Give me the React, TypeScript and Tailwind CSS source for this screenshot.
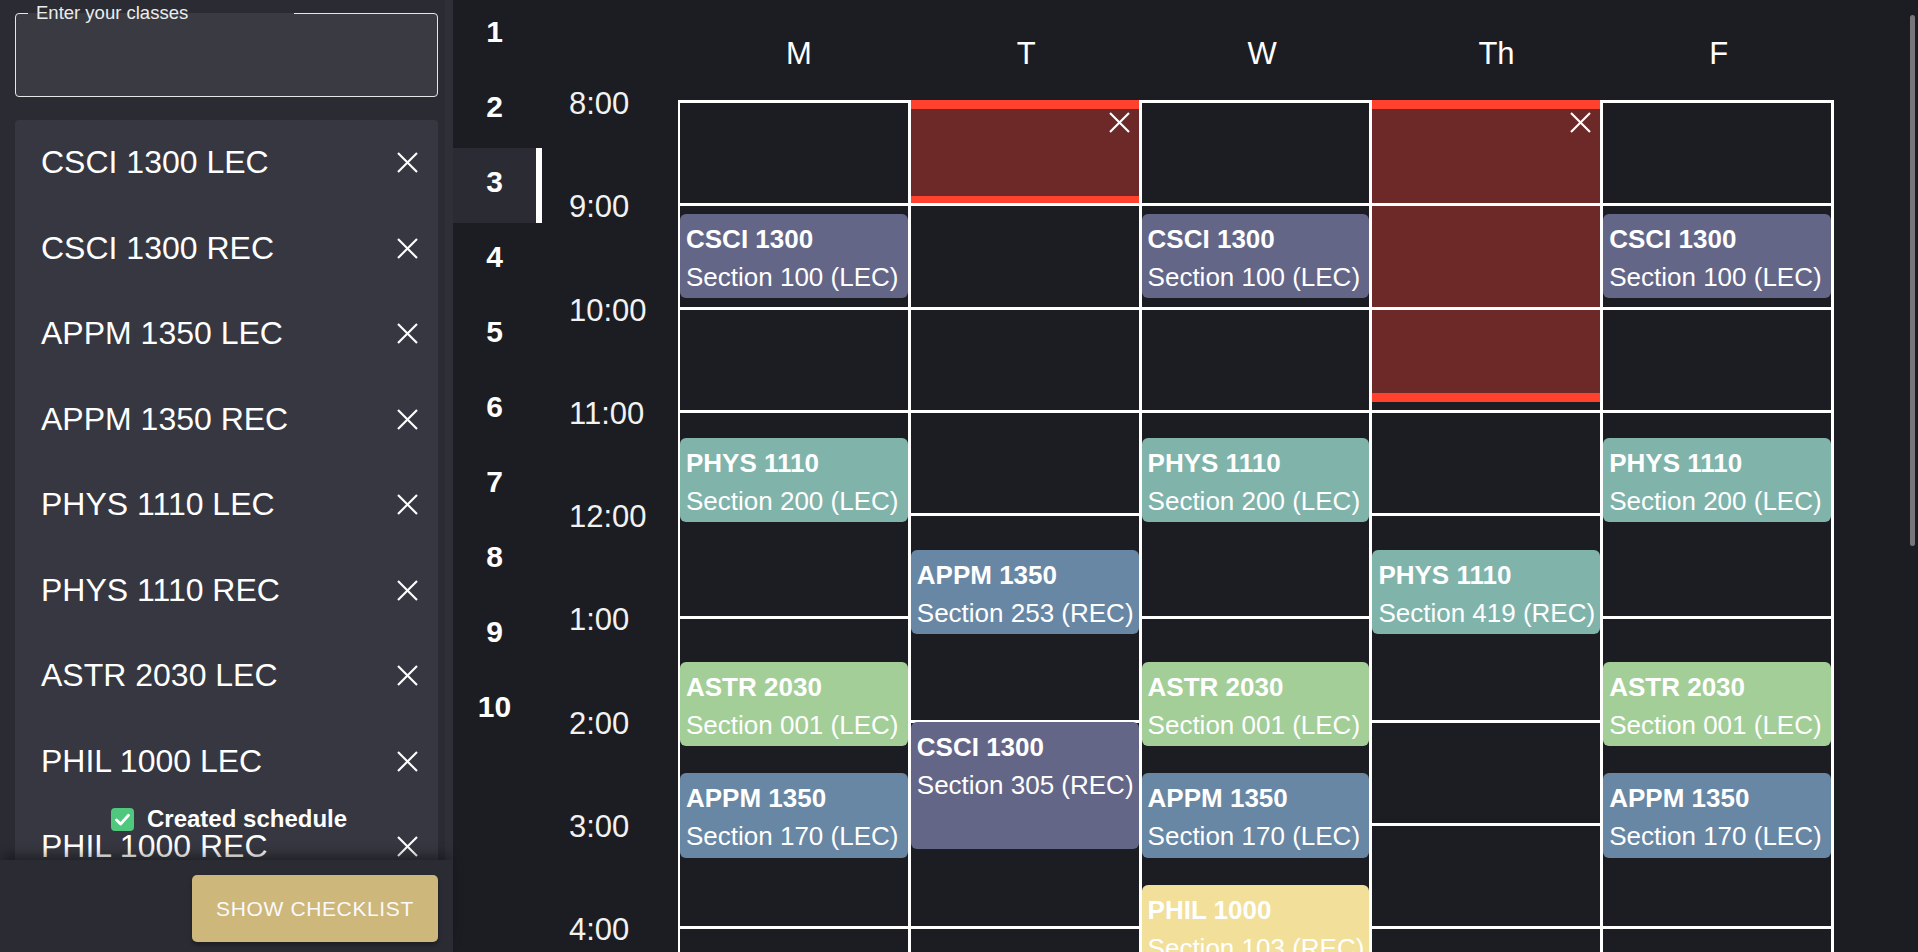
import React from "react";

const H = 103.3;

type Ev = { title: string; sub: string; start: number; dur: number; color: string };

const t = (h: number, m: number) => h * 60 + m;

const CSCI100: Ev = { title: "CSCI 1300", sub: "Section 100 (LEC)", start: t(9, 5), dur: 50, color: "bg-[#646688]" };
const PHYS200: Ev = { title: "PHYS 1110", sub: "Section 200 (LEC)", start: t(11, 15), dur: 50, color: "bg-[#80b4ab]" };
const ASTR001: Ev = { title: "ASTR 2030", sub: "Section 001 (LEC)", start: t(13, 25), dur: 50, color: "bg-[#a3ce98]" };
const APPM170: Ev = { title: "APPM 1350", sub: "Section 170 (LEC)", start: t(14, 30), dur: 50, color: "bg-[#6887a4]" };
const PHIL103: Ev = { title: "PHIL 1000", sub: "Section 103 (REC)", start: t(15, 35), dur: 50, color: "bg-[#f2df99]" };
const APPM253: Ev = { title: "APPM 1350", sub: "Section 253 (REC)", start: t(12, 20), dur: 50, color: "bg-[#6887a4]" };
const CSCI305: Ev = { title: "CSCI 1300", sub: "Section 305 (REC)", start: t(14, 0), dur: 75, color: "bg-[#646688]" };
const PHYS419: Ev = { title: "PHYS 1110", sub: "Section 419 (REC)", start: t(12, 20), dur: 50, color: "bg-[#80b4ab]" };

type Col = { day: string; events: Ev[]; block?: number };

const cols: Col[] = [
  { day: "M", events: [CSCI100, PHYS200, ASTR001, APPM170] },
  { day: "T", events: [APPM253, CSCI305], block: 105.3 },
  { day: "W", events: [CSCI100, PHYS200, ASTR001, APPM170, PHIL103] },
  { day: "Th", events: [PHYS419], block: 302.3 },
  { day: "F", events: [CSCI100, PHYS200, ASTR001, APPM170] },
];

const times = ["8:00", "9:00", "10:00", "11:00", "12:00", "1:00", "2:00", "3:00", "4:00", "5:00"];

const classes = [
  "CSCI 1300 LEC",
  "CSCI 1300 REC",
  "APPM 1350 LEC",
  "APPM 1350 REC",
  "PHYS 1110 LEC",
  "PHYS 1110 REC",
  "ASTR 2030 LEC",
  "PHIL 1000 LEC",
  "PHIL 1000 REC",
];

function XIcon() {
  return (
    <svg width="21" height="21" viewBox="0 0 21 21" className="block">
      <line x1="1" y1="1" x2="20" y2="20" stroke="white" strokeWidth="2.1" />
      <line x1="20" y1="1" x2="1" y2="20" stroke="white" strokeWidth="2.1" />
    </svg>
  );
}

function CheckBox() {
  return (
    <svg width="23" height="23" viewBox="0 0 23 23" className="block">
      <rect x="0" y="0" width="23" height="23" rx="4" fill="#4fc77d" />
      <path d="M5.5 12 L9.6 16 L17.5 7.2" fill="none" stroke="white" strokeWidth="2.8" strokeLinecap="round" strokeLinejoin="round" />
    </svg>
  );
}

function Sidebar() {
  return (
    <aside className="relative w-[453px] h-full shrink-0 bg-[#2a2b33] flex flex-col">
      <div className="absolute right-0 top-0 w-[8px] h-[860px] bg-[#2e2f37]" />
      <div className="flex-1 min-h-0 overflow-hidden pl-[15px] pr-[15px]">
        <fieldset className="mt-[2px] h-[95px] rounded-[4px] border border-[#e6e6e6] bg-[#393a42]">
          <legend className="ml-[12px] w-[266px] pl-[8px] text-[18.5px] leading-[22px] text-[#ececec]">
            Enter your classes
          </legend>
        </fieldset>
        <div className="mt-[23px] rounded-[4px] bg-[#363740]">
          {classes.map((c) => (
            <div key={c} className="h-[85.5px] flex items-center justify-between pl-[26px] pr-[20px]">
              <span className="text-[32px] leading-[37px] text-white whitespace-nowrap">{c}</span>
              <XIcon />
            </div>
          ))}
        </div>
      </div>
      <div className="relative z-10 h-[92px] shrink-0 bg-[#2a2b33] shadow-[0_-8px_12px_-4px_rgba(0,0,0,0.45)] flex justify-end items-start pt-[15px] pr-[15px]">
        <button className="w-[246px] h-[67px] rounded-[5px] bg-[#cdb77b] text-[#fafafa] text-[21px] tracking-[0.03em] uppercase shadow-[0_3px_4px_rgba(0,0,0,0.3)]">
          Show checklist
        </button>
      </div>
      <div className="absolute z-20 top-[805px] left-[111px] flex items-center gap-[13px]">
        <CheckBox />
        <span className="text-[24px] leading-[28px] font-bold text-white">Created schedule</span>
      </div>
    </aside>
  );
}

function Tabs() {
  return (
    <nav className="w-[89px] shrink-0 -mt-[2px] flex flex-col">
      {Array.from({ length: 10 }, (_, i) => i + 1).map((n) => {
        const sel = n === 3;
        return (
          <div key={n} className="h-[75px] flex shrink-0">
            <div className={`w-[83px] flex items-center justify-center pb-[8px] ${sel ? "bg-[#2a2b33]" : ""}`}>
              <span className="text-[30px] leading-[34px] font-bold text-white">{n}</span>
            </div>
            <div className={`w-[6px] ${sel ? "bg-white" : ""}`} />
          </div>
        );
      })}
    </nav>
  );
}

function Column({ col }: { col: Col }) {
  return (
    <div className="relative w-[230.8px] shrink-0 border-t-[3px] border-r-[3px] border-white">
      {col.block !== undefined && (
        <div
          className="absolute z-0 left-0 right-0 top-[-3px] bg-[#6c2928] flex flex-col justify-between"
          style={{ height: col.block }}
        >
          <div className="h-[9px] bg-[#ff412d]" />
          <div className="h-[9px] bg-[#ff412d]" />
          <div className="absolute top-[12px] right-[9px]">
            <XIcon />
          </div>
        </div>
      )}
      <div className="relative z-10">
        {times.map((tm) => (
          <div key={tm} className="h-[103.3px] border-b-[3px] border-white" />
        ))}
      </div>
      {col.events.map((e) => (
        <div
          key={e.sub}
          className={`absolute z-20 left-0 right-0 rounded-[6px] ${e.color} px-[6px] pt-[6px] overflow-hidden whitespace-nowrap text-white`}
          style={{ top: ((e.start - 480) / 60) * H - 1, height: (e.dur / 60) * H - 1.8 }}
        >
          <div className="text-[26px] leading-[38px] font-bold">{e.title}</div>
          <div className="text-[26px] leading-[38px]">{e.sub}</div>
        </div>
      ))}
    </div>
  );
}

export default function App() {
  return (
    <div className="relative w-[1918px] h-[952px] overflow-hidden bg-[#1c1d22] text-white font-['Liberation_Sans',Arial,sans-serif] flex items-start">
      <Sidebar />
      <Tabs />
      <div className="flex items-start pl-[27px] shrink-0">
        <div className="w-[109px] shrink-0 pt-[52.35px]">
          {times.map((tm) => (
            <div key={tm} className="h-[103.3px] flex items-center">
              <span className="text-[31px] leading-[36px] text-[#f2f2f2]">{tm}</span>
            </div>
          ))}
        </div>
        <div className="flex flex-col shrink-0">
          <div className="h-[100px] shrink-0 pt-[7px] flex items-center">
            {cols.map((c) => (
              <div key={c.day} className="w-[230.8px] pl-[108px] text-[31px] leading-[36px] text-white">
                {c.day}
              </div>
            ))}
          </div>
          <div className="flex shrink-0 border-l-2 border-white">
            {cols.map((c) => (
              <Column key={c.day} col={c} />
            ))}
          </div>
        </div>
      </div>
      <div className="absolute right-[3px] top-[15px] w-[5px] h-[531px] rounded-full bg-[#77777b]" />
    </div>
  );
}
